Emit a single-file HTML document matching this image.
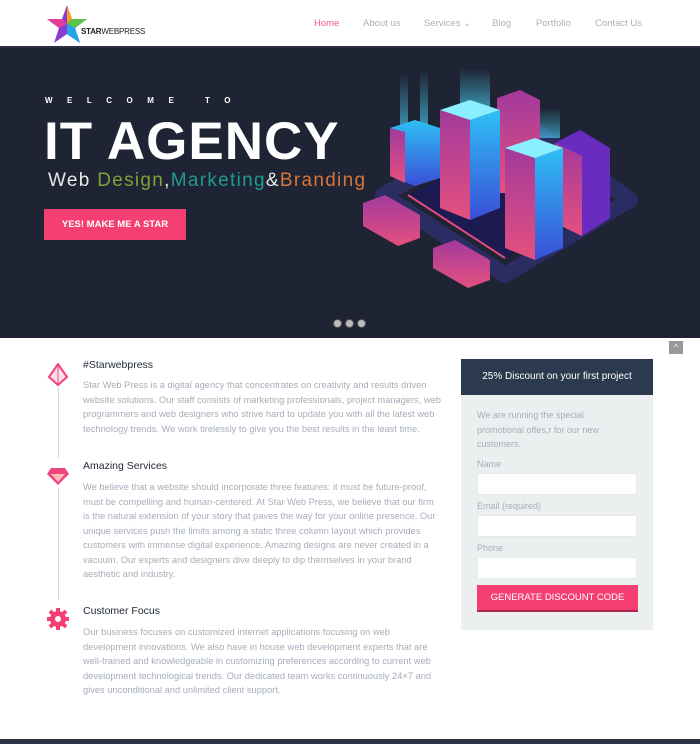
<!DOCTYPE html>
<html><head><meta charset="utf-8"><style>
*{margin:0;padding:0;box-sizing:border-box}
body{width:700px;height:744px;overflow:hidden;background:#fff;font-family:"Liberation Sans",sans-serif;position:relative}
.nav{position:absolute;top:0;left:0;width:700px;height:48px;background:#fff;border-bottom:2px solid #2a3040}
.nav a{position:absolute;top:18px;font-size:9.5px;color:#a9b0bb;text-decoration:none}
.hero{position:absolute;top:48px;left:0;width:700px;height:290px;background:#1e2433}
.p{position:absolute;left:83px;font-size:9.3px;line-height:14.5px;color:#a6aeba;white-space:nowrap}
.h{position:absolute;left:83px;font-size:10.5px;color:#222b38}
.lbl{position:absolute;left:477px;font-size:9px;color:#a6aeba}
.inp{position:absolute;left:477px;width:160px;height:22px;background:#fff;border:1px solid #e4e8ea}
</style></head><body>
<div class="nav">
<svg style="position:absolute;left:46px;top:4px" width="42" height="40" viewBox="0 0 42 40">
<polygon points="21,1 26,15 41,15 29,24 34,39 21,30 8,39 13,24 1,15 16,15" fill="#8a3bd0"/>
<polygon points="21,1 26,15 21,20" fill="#f6a21a"/><polygon points="26,15 41,15 29,24 21,20" fill="#5cc24a"/>
<polygon points="29,24 34,39 21,30 21,20" fill="#1fa6e8"/><polygon points="1,15 16,15 21,20 13,24" fill="#e0409a"/>
</svg>
<span style="position:absolute;left:81px;top:27px;font-size:8px;color:#222;letter-spacing:-0.2px"><b>STAR</b>WEBPRESS</span>
<a style="left:314px;color:#f4587f">Home</a>
<a style="left:363px">About us</a>
<a style="left:424px">Services ⌄</a>
<a style="left:492px">Blog</a>
<a style="left:536px">Portfolio</a>
<a style="left:595px">Contact Us</a>
</div>
<div class="hero">
<div style="position:absolute;left:45px;top:48px;color:#fff;font-size:8px;font-weight:bold;letter-spacing:14.5px">WELCOME TO</div>
<div style="position:absolute;left:44px;top:63px;color:#fff;font-size:53px;font-weight:bold;letter-spacing:1px">IT AGENCY</div>
<div style="position:absolute;left:48px;top:122px;font-size:19px;letter-spacing:1.3px;color:#e8e8e8">Web <span style="color:#7fa23b">Design</span>,<span style="color:#1f9c8c">Marketing</span>&amp;<span style="color:#d8753c">Branding</span></div>
<div style="position:absolute;left:44px;top:161px;width:142px;height:31px;background:#f43f73;color:#fff;font-size:9.5px;font-weight:bold;text-align:center;line-height:31px">YES! MAKE ME A STAR</div>
<svg style="position:absolute;left:360px;top:20px" width="290" height="240" viewBox="0 0 290 240">
<defs>
<linearGradient id="pk" x1="0" y1="0" x2="0" y2="1"><stop offset="0" stop-color="#a23a9c"/><stop offset="1" stop-color="#e4507e"/></linearGradient>
<linearGradient id="bl" x1="0" y1="0" x2="0" y2="1"><stop offset="0" stop-color="#2fc0f5"/><stop offset="1" stop-color="#3a4fd8"/></linearGradient>
<linearGradient id="gl" x1="0" y1="1" x2="0" y2="0"><stop offset="0" stop-color="#4fd8ff" stop-opacity=".6"/><stop offset="1" stop-color="#4fd8ff" stop-opacity="0"/></linearGradient>
</defs>
<polygon points="23,127 160,52 270,132 145,207" fill="none" stroke="#2b2c62" stroke-width="16" stroke-linejoin="round"/>
<polygon points="48,127 160,70 245,132 145,190" fill="#1c1a50"/>
<line x1="48" y1="127" x2="145" y2="190" stroke="#e04a80" stroke-width="2"/>
<polygon points="3,135 25,127 60,147 60,170 38,178 3,158" fill="url(#pk)"/>
<polygon points="73,180 95,172 130,192 130,212 108,220 73,200" fill="url(#pk)"/>
<rect x="40" y="5" width="8" height="55" fill="url(#gl)"/><rect x="60" y="2" width="8" height="55" fill="url(#gl)"/>
<rect x="100" y="0" width="30" height="40" fill="url(#gl)"/><rect x="175" y="40" width="25" height="30" fill="url(#gl)"/>
<polygon points="30,60 55,52 80,60 80,110 55,118 30,108" fill="url(#bl)"/><polygon points="30,60 45,64 45,115 30,108" fill="url(#pk)"/>
<polygon points="137,30 160,22 180,32 180,125 137,125" fill="url(#pk)"/>
<polygon points="195,75 220,62 250,80 250,150 222,168 195,155" fill="#6a2bc0"/><polygon points="195,75 222,88 222,168 195,155" fill="url(#pk)"/>
<polygon points="80,42 110,52 110,152 80,140" fill="url(#pk)"/><polygon points="110,52 140,42 140,140 110,152" fill="url(#bl)"/>
<polygon points="80,42 110,32 140,42 110,52" fill="#8af0ff"/>
<polygon points="145,80 175,90 175,192 145,180" fill="url(#pk)"/><polygon points="175,90 203,80 203,180 175,192" fill="url(#bl)"/>
<polygon points="145,80 175,70 203,80 175,90" fill="#8af0ff"/>
</svg>
<div style="position:absolute;left:333px;top:271px;width:9px;height:9px;border-radius:50%;background:#bbb;border:1px solid #555"></div>
<div style="position:absolute;left:345px;top:271px;width:9px;height:9px;border-radius:50%;background:#bbb;border:1px solid #555"></div>
<div style="position:absolute;left:357px;top:271px;width:9px;height:9px;border-radius:50%;background:#bbb;border:1px solid #555"></div>
</div>
<div style="position:absolute;left:669px;top:341px;width:14px;height:13px;background:#999;color:#fff;font-size:8px;text-align:center;line-height:13px">^</div>
<div style="position:absolute;left:58px;top:388px;width:1px;height:70px;background:#d4d8de"></div>
<div style="position:absolute;left:58px;top:488px;width:1px;height:112px;background:#d4d8de"></div>
<svg style="position:absolute;left:47px;top:363px" width="22" height="24" viewBox="0 0 22 24"><polygon points="11,1 20,14 11,22 2,14" fill="#fde" stroke="#f0457a" stroke-width="2"/><line x1="11" y1="1" x2="11" y2="22" stroke="#f0457a"/></svg>
<svg style="position:absolute;left:46px;top:466px" width="24" height="20" viewBox="0 0 24 20"><polygon points="5,2 19,2 23,8 12,19 1,8" fill="#f0457a"/><polygon points="5,8 19,8 12,16" fill="#fbb"/></svg>
<svg style="position:absolute;left:46px;top:607px" width="24" height="24" viewBox="0 0 24 24"><circle cx="12" cy="12" r="8" fill="#f43f73"/><g stroke="#f43f73" stroke-width="4"><line x1="12" y1="1" x2="12" y2="23"/><line x1="1" y1="12" x2="23" y2="12"/><line x1="4" y1="4" x2="20" y2="20"/><line x1="20" y1="4" x2="4" y2="20"/></g><circle cx="12" cy="12" r="3" fill="#fff"/></svg>
<div class="h" style="top:359px">#Starwebpress</div>
<div class="p" style="top:378px">Star Web Press is a digital agency that concentrates on creativity and results driven<br>website solutions. Our staff consists of marketing professionals, project managers, web<br>programmers and web designers who strive hard to update you with all the latest web<br>technology trends. We work tirelessly to give you the best results in the least time.</div>
<div class="h" style="top:460px">Amazing Services</div>
<div class="p" style="top:480px">We believe that a website should incorporate three features: it must be future-proof,<br>must be compelling and human-centered. At Star Web Press, we believe that our firm<br>is the natural extension of your story that paves the way for your online presence. Our<br>unique services push the limits among a static three column layout which provides<br>customers with immense digital experience. Amazing designs are never created in a<br>vacuum. Our experts and designers dive deeply to dip themselves in your brand<br>aesthetic and industry.</div>
<div class="h" style="top:605px">Customer Focus</div>
<div class="p" style="top:625px">Our business focuses on customized internet applications focusing on web<br>development innovations. We also have in house web development experts that are<br>well-trained and knowledgeable in customizing preferences according to current web<br>development technological trends. Our dedicated team works continuously 24×7 and<br>gives unconditional and unlimited client support.</div>
<div style="position:absolute;left:461px;top:359px;width:192px;height:271px;background:#eceff0"></div>
<div style="position:absolute;left:461px;top:359px;width:192px;height:36px;background:#2b3a4e;color:#fff;font-size:10px;text-align:center;line-height:36px">25% Discount on your first project</div>
<div style="position:absolute;left:477px;top:408px;font-size:9px;line-height:14.5px;color:#a6aeba">We are running the special<br>promotional offes,r for our new<br>customers.</div>
<div class="lbl" style="top:459px">Name</div><div class="inp" style="top:473px"></div>
<div class="lbl" style="top:501px">Email (required)</div><div class="inp" style="top:515px"></div>
<div class="lbl" style="top:543px">Phone</div><div class="inp" style="top:557px"></div>
<div style="position:absolute;left:477px;top:585px;width:161px;height:27px;background:#f43f73;border-bottom:2px solid #a8284e;color:#fff;font-size:9.5px;text-align:center;line-height:25px">GENERATE DISCOUNT CODE</div>
<div style="position:absolute;left:0;top:739px;width:700px;height:5px;background:#2b3444"></div>
</body></html>
